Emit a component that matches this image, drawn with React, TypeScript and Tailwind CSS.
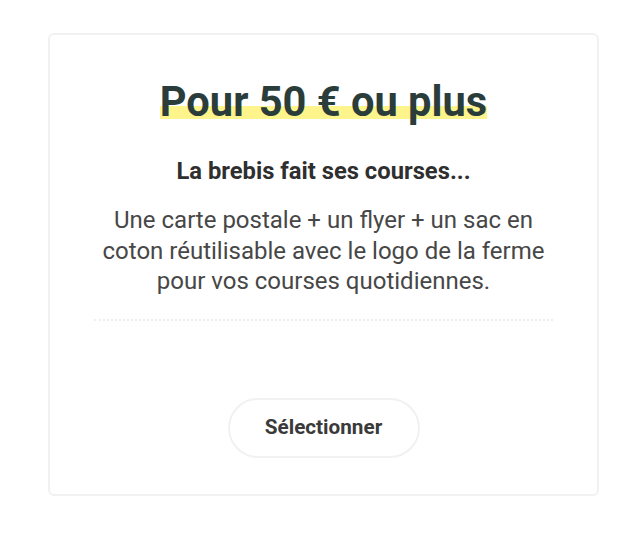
export default function App() {
  return (
    <div className="min-h-[535px] w-[640px] bg-white pt-[33px] pl-[48px] font-['Roboto',sans-serif]">
      <div className="flex h-[463px] w-[551px] flex-col items-center rounded-[6px] border-2 border-[#f1f1f1] px-[44px] pt-[42px]">
        <h2 className="bg-[linear-gradient(180deg,transparent_58%,#fdf48c_58%,#fdf48c_84%,transparent_84%)] text-[41.6px] leading-[50px] font-bold text-[#2b3d3a]">
          Pour 50 € ou plus
        </h2>
        <p className="mt-[29px] text-[23.75px] leading-[30px] font-bold text-[#2f2f2f]">
          La brebis fait ses courses...
        </p>
        <p className="mt-[19px] text-center text-[24px] leading-[30.5px] text-[#474747]">
          Une carte postale + un flyer + un sac en coton réutilisable avec le logo de la ferme pour vos courses
          quotidiennes.
        </p>
        <div className="mt-[22px] w-full border-t-2 border-dotted border-[#eeeeee]" />
        <button
          type="button"
          className="mt-[77px] h-[60px] w-[192px] rounded-full border-2 border-[#f1f1f1] bg-white text-[20.7px] font-bold text-[#3a3a3a]"
        >
          Sélectionner
        </button>
      </div>
    </div>
  );
}
